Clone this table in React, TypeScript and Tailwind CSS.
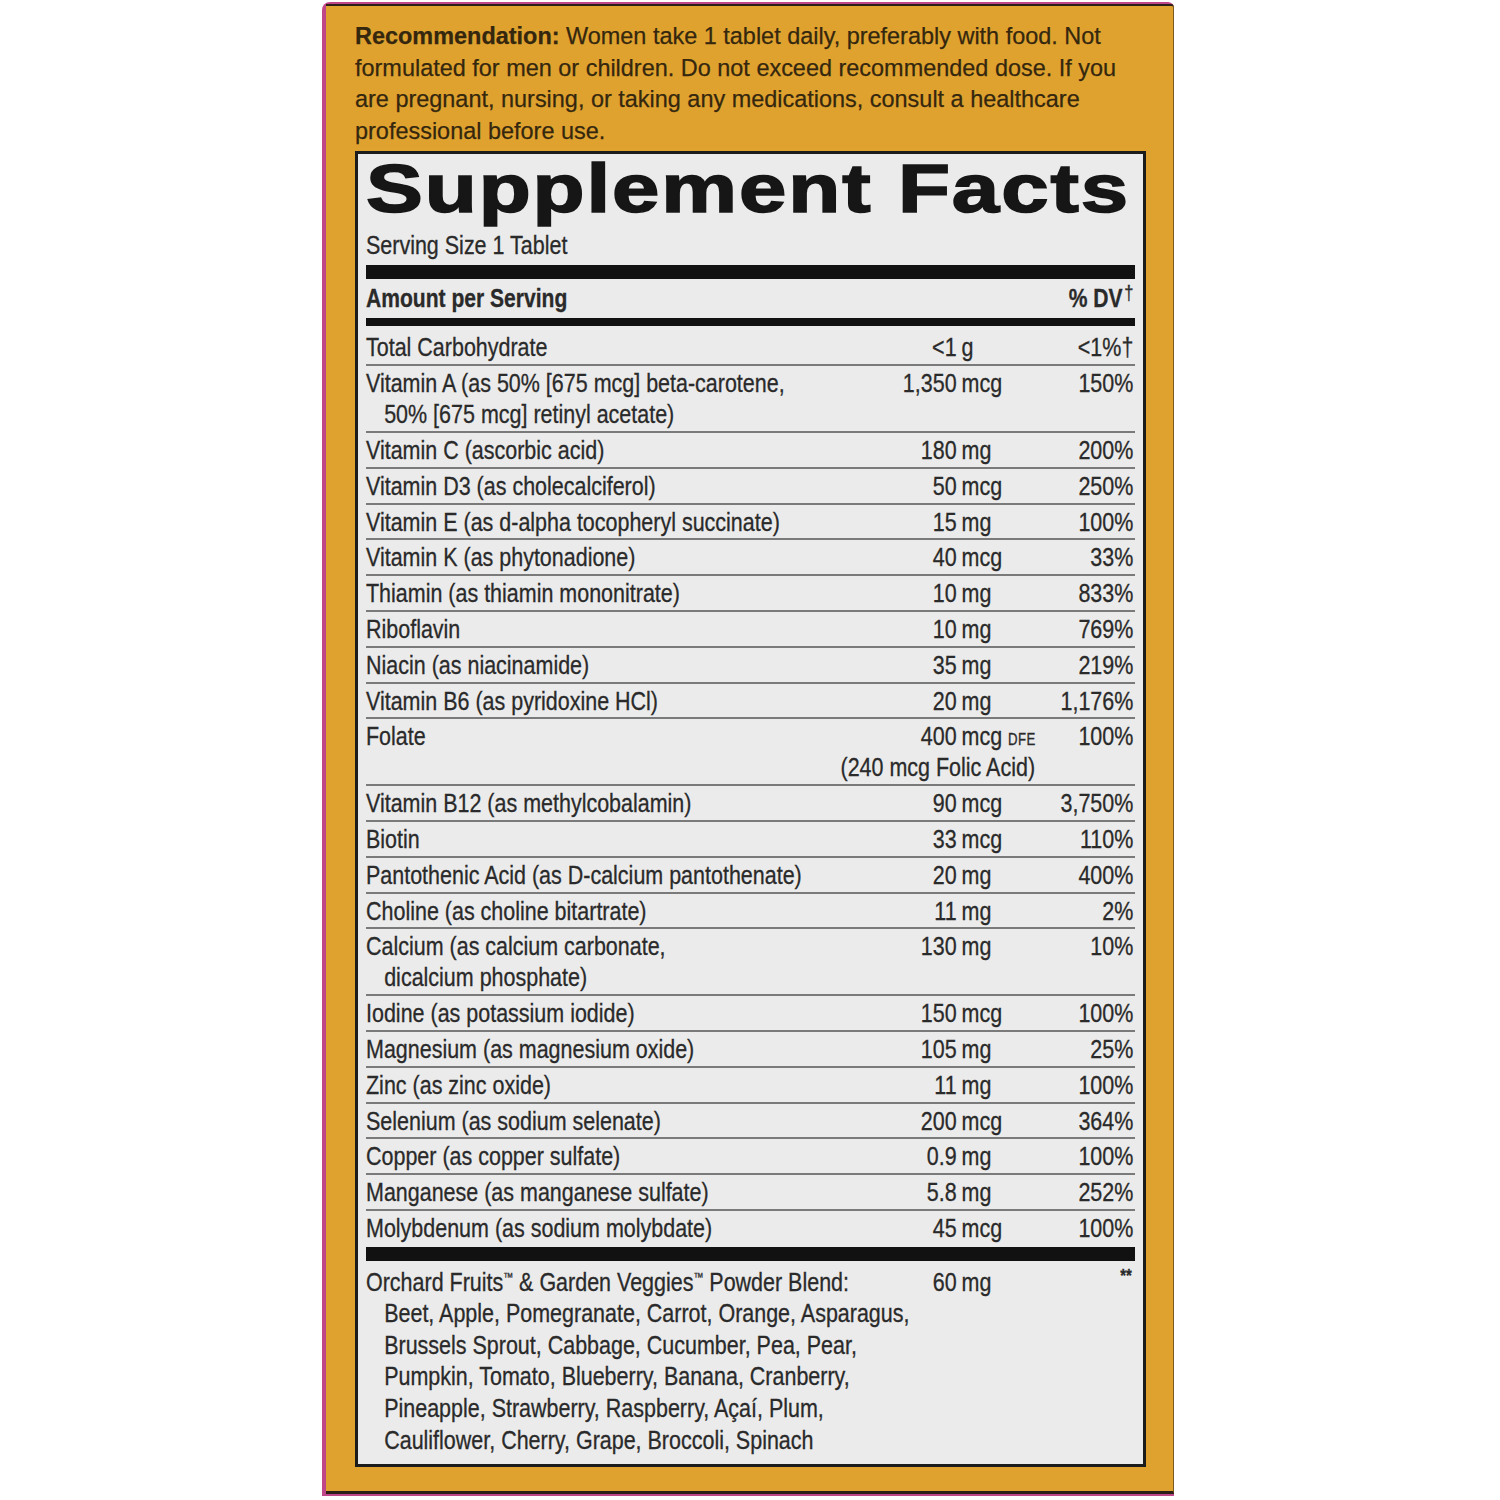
import React from "react";

type Row = {
  name: string;
  name2?: string;
  num: string;
  unit: string;
  dv: string;
};

const rows: Row[] = [
  { name: "Total Carbohydrate", num: "<1", unit: "g", dv: "<1%†" },
  { name: "Vitamin A (as 50% [675 mcg] beta-carotene,", name2: "50% [675 mcg] retinyl acetate)", num: "1,350", unit: "mcg", dv: "150%" },
  { name: "Vitamin C (ascorbic acid)", num: "180", unit: "mg", dv: "200%" },
  { name: "Vitamin D3 (as cholecalciferol)", num: "50", unit: "mcg", dv: "250%" },
  { name: "Vitamin E (as d-alpha tocopheryl succinate)", num: "15", unit: "mg", dv: "100%" },
  { name: "Vitamin K (as phytonadione)", num: "40", unit: "mcg", dv: "33%" },
  { name: "Thiamin (as thiamin mononitrate)", num: "10", unit: "mg", dv: "833%" },
  { name: "Riboflavin", num: "10", unit: "mg", dv: "769%" },
  { name: "Niacin (as niacinamide)", num: "35", unit: "mg", dv: "219%" },
  { name: "Vitamin B6 (as pyridoxine HCl)", num: "20", unit: "mg", dv: "1,176%" },
  { name: "Folate", num: "400", unit: "FOLATE", dv: "100%" },
  { name: "Vitamin B12 (as methylcobalamin)", num: "90", unit: "mcg", dv: "3,750%" },
  { name: "Biotin", num: "33", unit: "mcg", dv: "110%" },
  { name: "Pantothenic Acid (as D-calcium pantothenate)", num: "20", unit: "mg", dv: "400%" },
  { name: "Choline (as choline bitartrate)", num: "11", unit: "mg", dv: "2%" },
  { name: "Calcium (as calcium carbonate,", name2: "dicalcium phosphate)", num: "130", unit: "mg", dv: "10%" },
  { name: "Iodine (as potassium iodide)", num: "150", unit: "mcg", dv: "100%" },
  { name: "Magnesium (as magnesium oxide)", num: "105", unit: "mg", dv: "25%" },
  { name: "Zinc (as zinc oxide)", num: "11", unit: "mg", dv: "100%" },
  { name: "Selenium (as sodium selenate)", num: "200", unit: "mcg", dv: "364%" },
  { name: "Copper (as copper sulfate)", num: "0.9", unit: "mg", dv: "100%" },
  { name: "Manganese (as manganese sulfate)", num: "5.8", unit: "mg", dv: "252%" },
  { name: "Molybdenum (as sodium molybdate)", num: "45", unit: "mcg", dv: "100%" },
];

const sans = "font-['Liberation_Sans',Arial,sans-serif]";

function NutrientRow({ r, last }: { r: Row; last: boolean }) {
  return (
    <div
      className={
        "flex items-start leading-[31px] pt-[2px] pb-[0.8px] whitespace-nowrap " +
        (last ? "" : "border-b-2 border-[#7a7a7a]")
      }
    >
      <div className="w-[568px] shrink-0">
        <div>{r.name}</div>
        {r.name2 && <div className="pl-[22px]">{r.name2}</div>}
      </div>
      {r.unit === "FOLATE" ? (
        <div className="w-[255px] shrink-0 flex flex-col">
          <div className="flex">
            <span className="w-[147px] text-right">400</span>
            <span className="pl-[6px]">
              mcg <span className="text-[16px] leading-none tracking-[0.5px]">DFE</span>
            </span>
          </div>
          <div className="w-[242px] text-right">(240 mcg Folic Acid)</div>
        </div>
      ) : (
        <div className="w-[255px] shrink-0 flex">
          <span className="w-[147px] text-right">{r.num}</span>
          <span className="pl-[6px]">{r.unit}</span>
        </div>
      )}
      <div className="flex-1 text-right pr-[2px]">{r.dv}</div>
    </div>
  );
}

export default function App() {
  return (
    <div className="w-[1500px] h-[1500px] bg-white relative overflow-hidden">
      <div className="pt-[2px] pl-[322px]">
        <div className="w-[852px] h-[1494px] bg-[#c0468a] rounded-tl-[8px] rounded-tr-[6px] pl-[4px] pt-[2px]">
          <div className="w-[848px] h-[1490px] bg-[#e0a22f] border-t-2 border-b-[3px] border-[#2c1f18] border-r border-r-[#7a5a20] rounded-tr-[3px] pl-[29px] pr-[25px] pt-[14px]">
            <div className="w-[820px] origin-left scale-x-[0.957]">
              <p className={sans + " text-[24.5px] leading-[31.6px] text-[#34270e] whitespace-nowrap [-webkit-text-stroke:0.25px_#34270e]"}>
                <span className="font-bold">Recommendation:</span> Women take 1 tablet daily, preferably with food. Not
                <br />
                formulated for men or children. Do not exceed recommended dose. If you
                <br />
                are pregnant, nursing, or taking any medications, consult a healthcare
                <br />
                professional before use.
              </p>
            </div>
            <div className="mt-[5px] w-[791px] border-[3px] border-[#1c1c1c] bg-[#ebebeb] pl-[8px] pr-[8px] pb-[8px] text-[#2a2a2a]">
              <div className="pt-[2px] h-[66px]">
                <div className={sans + " w-[610px] origin-left scale-x-[1.253] font-bold text-[68px] leading-[64px] tracking-[1.5px] text-[#161616] [-webkit-text-stroke:1.6px_#161616] whitespace-nowrap"}>
                  Supplement Facts
                </div>
              </div>
              <div className={"w-[931px] origin-left scale-x-[0.826] [-webkit-text-stroke:0.3px_#2a2a2a] " + sans}>
                <div className="text-[26px] leading-[30px] mt-[10px]">Serving Size 1 Tablet</div>
                <div className="h-[14px] bg-[#111] mt-[5px]" />
                <div className="flex justify-between font-bold text-[25.5px] leading-[39px]">
                  <span>Amount per Serving</span>
                  <span className="pr-[2px]">
                    % DV<span className="relative top-[-7px] text-[20px] leading-none font-normal pl-[2px]">†</span>
                  </span>
                </div>
                <div className="h-[8px] bg-[#111]" />
                <div className="text-[26px] mt-[4px]">
                  {rows.map((r, i) => (
                    <NutrientRow key={i} r={r} last={i === rows.length - 1} />
                  ))}
                </div>
                <div className="h-[14px] bg-[#111] mt-[2px]" />
                <div className="flex items-start text-[26px] leading-[31.6px] mt-[6px] whitespace-nowrap">
                  <div className="w-[568px] shrink-0">
                    <div>
                      Orchard Fruits<span className="relative top-[-10px] text-[12px] leading-none">™</span> &amp; Garden Veggies
                      <span className="relative top-[-10px] text-[12px] leading-none">™</span> Powder Blend:
                    </div>
                    <div className="pl-[22px]">
                      Beet, Apple, Pomegranate, Carrot, Orange, Asparagus,
                      <br />
                      Brussels Sprout, Cabbage, Cucumber, Pea, Pear,
                      <br />
                      Pumpkin, Tomato, Blueberry, Banana, Cranberry,
                      <br />
                      Pineapple, Strawberry, Raspberry, Açaí, Plum,
                      <br />
                      Cauliflower, Cherry, Grape, Broccoli, Spinach
                    </div>
                  </div>
                  <div className="w-[255px] shrink-0 flex">
                    <span className="w-[147px] text-right">60</span>
                    <span className="pl-[6px]">mg</span>
                  </div>
                  <div className="flex-1 text-right text-[18px] leading-[18px] font-bold pr-[4px]">**</div>
                </div>
              </div>
            </div>
          </div>
        </div>
      </div>
    </div>
  );
}
